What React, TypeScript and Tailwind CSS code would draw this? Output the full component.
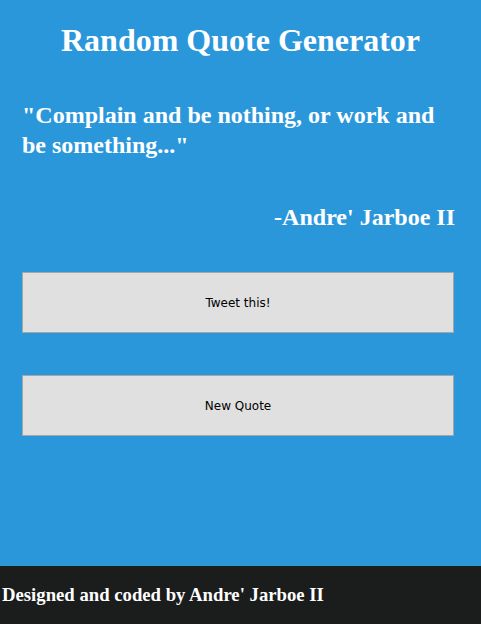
export default function App() {
  const serif = { fontFamily: '"Liberation Serif", "Times New Roman", serif' };
  return (
    <div className="min-h-screen flex flex-col bg-[#2b97db]" style={serif}>
      <main className="flex-1 px-[22px] pt-[22px]">
        <h1 className="text-center text-white font-bold text-[32px] leading-[37px]">Random Quote Generator</h1>
        <p className="mt-[41px] text-white font-bold text-[24px] leading-[30px]">
          "Complain and be nothing, or work and be something..."
        </p>
        <p className="mt-[42px] text-right pr-[4px] text-white font-bold text-[24px] leading-[30px]">-Andre' Jarboe II</p>
        <div className="mt-[40px] flex flex-col gap-[42px] w-[432px]">
          <button
            className="h-[61px] w-full bg-[#e0e0e0] border border-[#a6a6a6] text-[12px] text-black"
            style={{ fontFamily: '"DejaVu Sans", Verdana, sans-serif' }}
          >
            Tweet this!
          </button>
          <button
            className="h-[61px] w-full bg-[#e0e0e0] border border-[#a6a6a6] text-[12px] text-black"
            style={{ fontFamily: '"DejaVu Sans", Verdana, sans-serif' }}
          >
            New Quote
          </button>
        </div>
      </main>
      <footer className="h-[58px] bg-[#1b1c1c] flex items-center px-[2px]">
        <span className="text-white font-bold text-[18.72px]">Designed and coded by Andre' Jarboe II</span>
      </footer>
    </div>
  );
}
